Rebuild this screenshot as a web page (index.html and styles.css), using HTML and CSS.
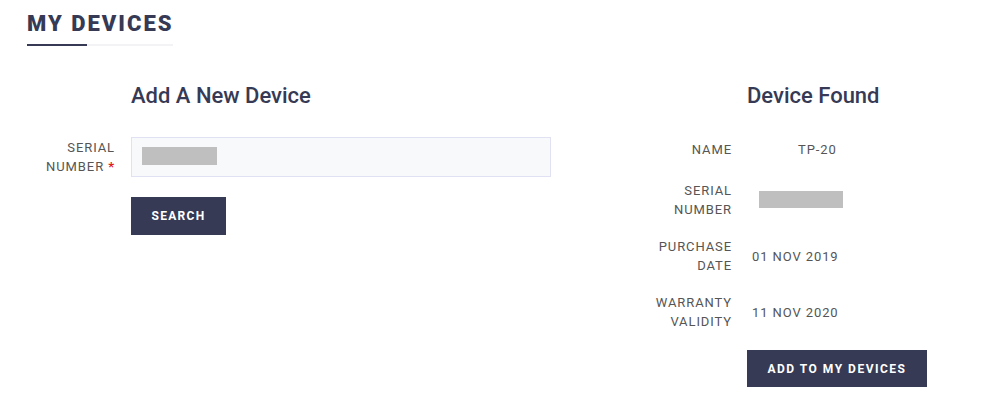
FILE: index.html
```html
<!DOCTYPE html>
<html>
<head>
<meta charset="utf-8">
<link rel="stylesheet" href="styles.css">
</head>
<body>
<header class="page-head">
  <h1 class="page-title">MY DEVICES</h1>
  <div class="title-rule"></div>
</header>
<main class="content">
  <section class="add-panel">
    <div class="spacer"></div>
    <h2 class="panel-title">Add A New Device</h2>
    <label class="field-label">SERIAL<br>NUMBER <span class="req">*</span></label>
    <div class="input-box"><span class="masked masked-input"></span></div>
    <div class="spacer"></div>
    <button class="btn">SEARCH</button>
  </section>
  <section class="found-panel">
    <div class="row row-head">
      <div></div>
      <h2 class="panel-title">Device Found</h2>
    </div>
    <div class="row row-name">
      <div class="info-label">NAME</div>
      <div class="info-value value-name">TP-20</div>
    </div>
    <div class="row row-serial">
      <div class="info-label">SERIAL<br>NUMBER</div>
      <div class="info-value value-serial"><span class="masked masked-serial"></span></div>
    </div>
    <div class="row row-purchase">
      <div class="info-label">PURCHASE<br>DATE</div>
      <div class="info-value">01 NOV 2019</div>
    </div>
    <div class="row row-warranty">
      <div class="info-label">WARRANTY<br>VALIDITY</div>
      <div class="info-value">11 NOV 2020</div>
    </div>
    <div class="row row-action">
      <div></div>
      <div><button class="btn btn-wide">ADD TO MY DEVICES</button></div>
    </div>
  </section>
</main>
</body>
</html>
```

FILE: styles.css
```css
* { box-sizing: border-box; }
html, body { margin: 0; padding: 0; background: #fff; }
body {
  font-family: Roboto, "Liberation Sans", Arial, sans-serif;
  color: #363a55;
  width: 996px;
  height: 407px;
  overflow: hidden;
}
.page-head {
  padding: 10px 0 0 27px;
}
.page-title {
  margin: 0;
  font-size: 22px;
  line-height: 28px;
  font-weight: 900;
  letter-spacing: 2px;
  color: #363a55;
}
.title-rule {
  margin-top: 6px;
  width: 146px;
  height: 2px;
  background: linear-gradient(to right, #363a55 0, #363a55 60px, #f3f3f6 60px, #f3f3f6 100%);
}
.content {
  display: flex;
  padding-top: 37px;
}
.add-panel {
  display: grid;
  grid-template-columns: 115px 420px;
  column-gap: 16px;
  align-items: center;
  align-content: start;
  width: 612px;
}
.panel-title {
  margin: 0;
  font-size: 22px;
  line-height: 26px;
  font-weight: 500;
  color: #363a55;
}
.field-label {
  margin-top: 28px;
  text-align: right;
  font-size: 13px;
  line-height: 19px;
  letter-spacing: 0.9px;
  color: #555;
  align-self: center;
}
.req { color: #e02020; font-weight: 700; }
.input-box {
  margin-top: 28px;
  height: 40px;
  background: #f8f9fb;
  border: 1px solid #e0e2f4;
  padding: 9px 10px;
}
.masked {
  display: block;
  background: #bfbfbf;
}
.masked-input { width: 75px; height: 18px; }
.btn {
  font-family: Roboto, "Liberation Sans", Arial, sans-serif;
  background: #363a55;
  color: #fff;
  border: 0;
  margin: 0;
  font-size: 12px;
  font-weight: 700;
  letter-spacing: 1.3px;
  height: 38px;
  padding: 0 20px;
  cursor: pointer;
}
.add-panel .btn { margin-top: 20px; width: 95px; padding: 0; }
.found-panel {
  display: flex;
  flex-direction: column;
}
.row {
  display: grid;
  grid-template-columns: 120px 200px;
  column-gap: 15px;
  align-items: center;
}
.info-label {
  text-align: right;
  font-size: 13px;
  line-height: 19px;
  letter-spacing: 0.9px;
  color: #555;
}
.info-value {
  padding-left: 5px;
  font-size: 13px;
  line-height: 19px;
  letter-spacing: 0.9px;
  color: #555;
}
.row-name { margin-top: 31px; }
.row-serial { margin-top: 22px; }
.row-purchase { margin-top: 18px; }
.row-warranty { margin-top: 18px; }
.row-action { margin-top: 19px; }
.value-name { padding-left: 51px; }
.value-serial { padding-left: 12px; }
.masked-serial { width: 84px; height: 17px; margin-top: -2px; }
.btn-wide { width: 180px; height: 37px; padding: 0; letter-spacing: 1.5px; }
```
